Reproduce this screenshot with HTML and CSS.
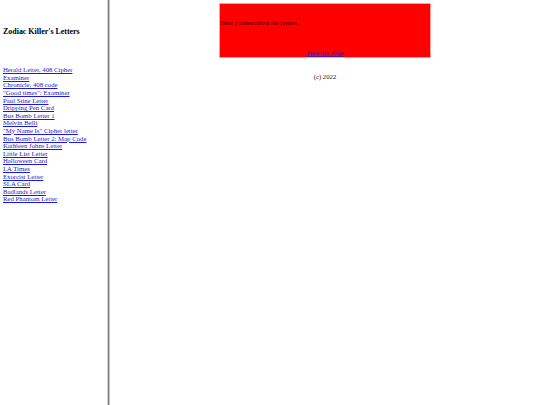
FILE: index.html
```html
<!DOCTYPE html>
<html>
  <head>
    <link rel="stylesheet" href="styles.css">
  </head>
  <body>
    <div class="page">
      <div class="side-frame">
        <h3 class="side-title">Zodiac Killer's Letters</h3>
        <ul class="letter-list">
          <li><a href="#">Herald Letter, 408 Cipher</a></li>
          <li><a href="#">Examiner</a></li>
          <li><a href="#">Chronicle, 408 code</a></li>
          <li><a href="#">"Good times": Examiner</a></li>
          <li><a href="#">Paul Stine Letter</a></li>
          <li><a href="#">Dripping Pen Card</a></li>
          <li><a href="#">Bus Bomb Letter 1</a></li>
          <li><a href="#">Melvin Belli</a></li>
          <li><a href="#">"My Name Is" Cipher letter</a></li>
          <li><a href="#">Bus Bomb Letter 2: Map Code</a></li>
          <li><a href="#">Kathleen Johns Letter</a></li>
          <li><a href="#">Little List Letter</a></li>
          <li><a href="#">Halloween Card</a></li>
          <li><a href="#">LA Times</a></li>
          <li><a href="#">Exorcist Letter</a></li>
          <li><a href="#">SLA Card</a></li>
          <li><a href="#">Badlands Letter</a></li>
          <li><a href="#">Red Phantom Letter</a></li>
        </ul>
      </div>
      <div class="frame-border"></div>
      <div class="main-frame">
        <div class="intro-box">
          <p class="intro-text">Here I transcribed the letters.</p>
          <div class="intro-next"><a href="#" class="next-link">Turn the Page</a></div>
        </div>
        <p class="copyright">(c) 2022</p>
      </div>
    </div>
  </body>
</html>
```

FILE: styles.css
```css
body {
  margin: 0;
  font-family: "Liberation Serif", "Times New Roman", serif;
  font-size: 6.75px;
  line-height: 7.6px;
  color: #000;
  background: #fff;
}
a {
  color: #1a1ad8;
}
.page {
  display: flex;
  height: 405px;
}
.side-frame {
  width: 104px;
  padding-left: 3px;
}
.side-title {
  margin: 26.5px 0 0 0;
  font-size: 7.95px;
  line-height: 9px;
  font-weight: bold;
}
.letter-list {
  list-style-type: none;
  margin: 30.7px 0 0 0;
  padding: 0;
}
.letter-list li {
  white-space: nowrap;
}
.frame-border {
  width: 1px;
  background: #7a7a7a;
  border-left: 1px solid #d8d8d8;
  border-right: 1px solid #c4c4c4;
}
.main-frame {
  flex: 1;
  padding-top: 3px;
}
.intro-box {
  width: 210px;
  margin: 0 auto;
  padding: 15.2px 0 0.2px 0;
  background: #ff0000;
  border: 1px solid #ff9c9c;
}
.intro-text {
  margin: 0;
  color: #3a0000;
}
.intro-next {
  margin-top: 22.4px;
  text-align: center;
}
.next-link {
  color: #551a8b;
}
.copyright {
  margin: 15.2px 0 0 0;
  text-align: center;
  color: #222;
}
```
